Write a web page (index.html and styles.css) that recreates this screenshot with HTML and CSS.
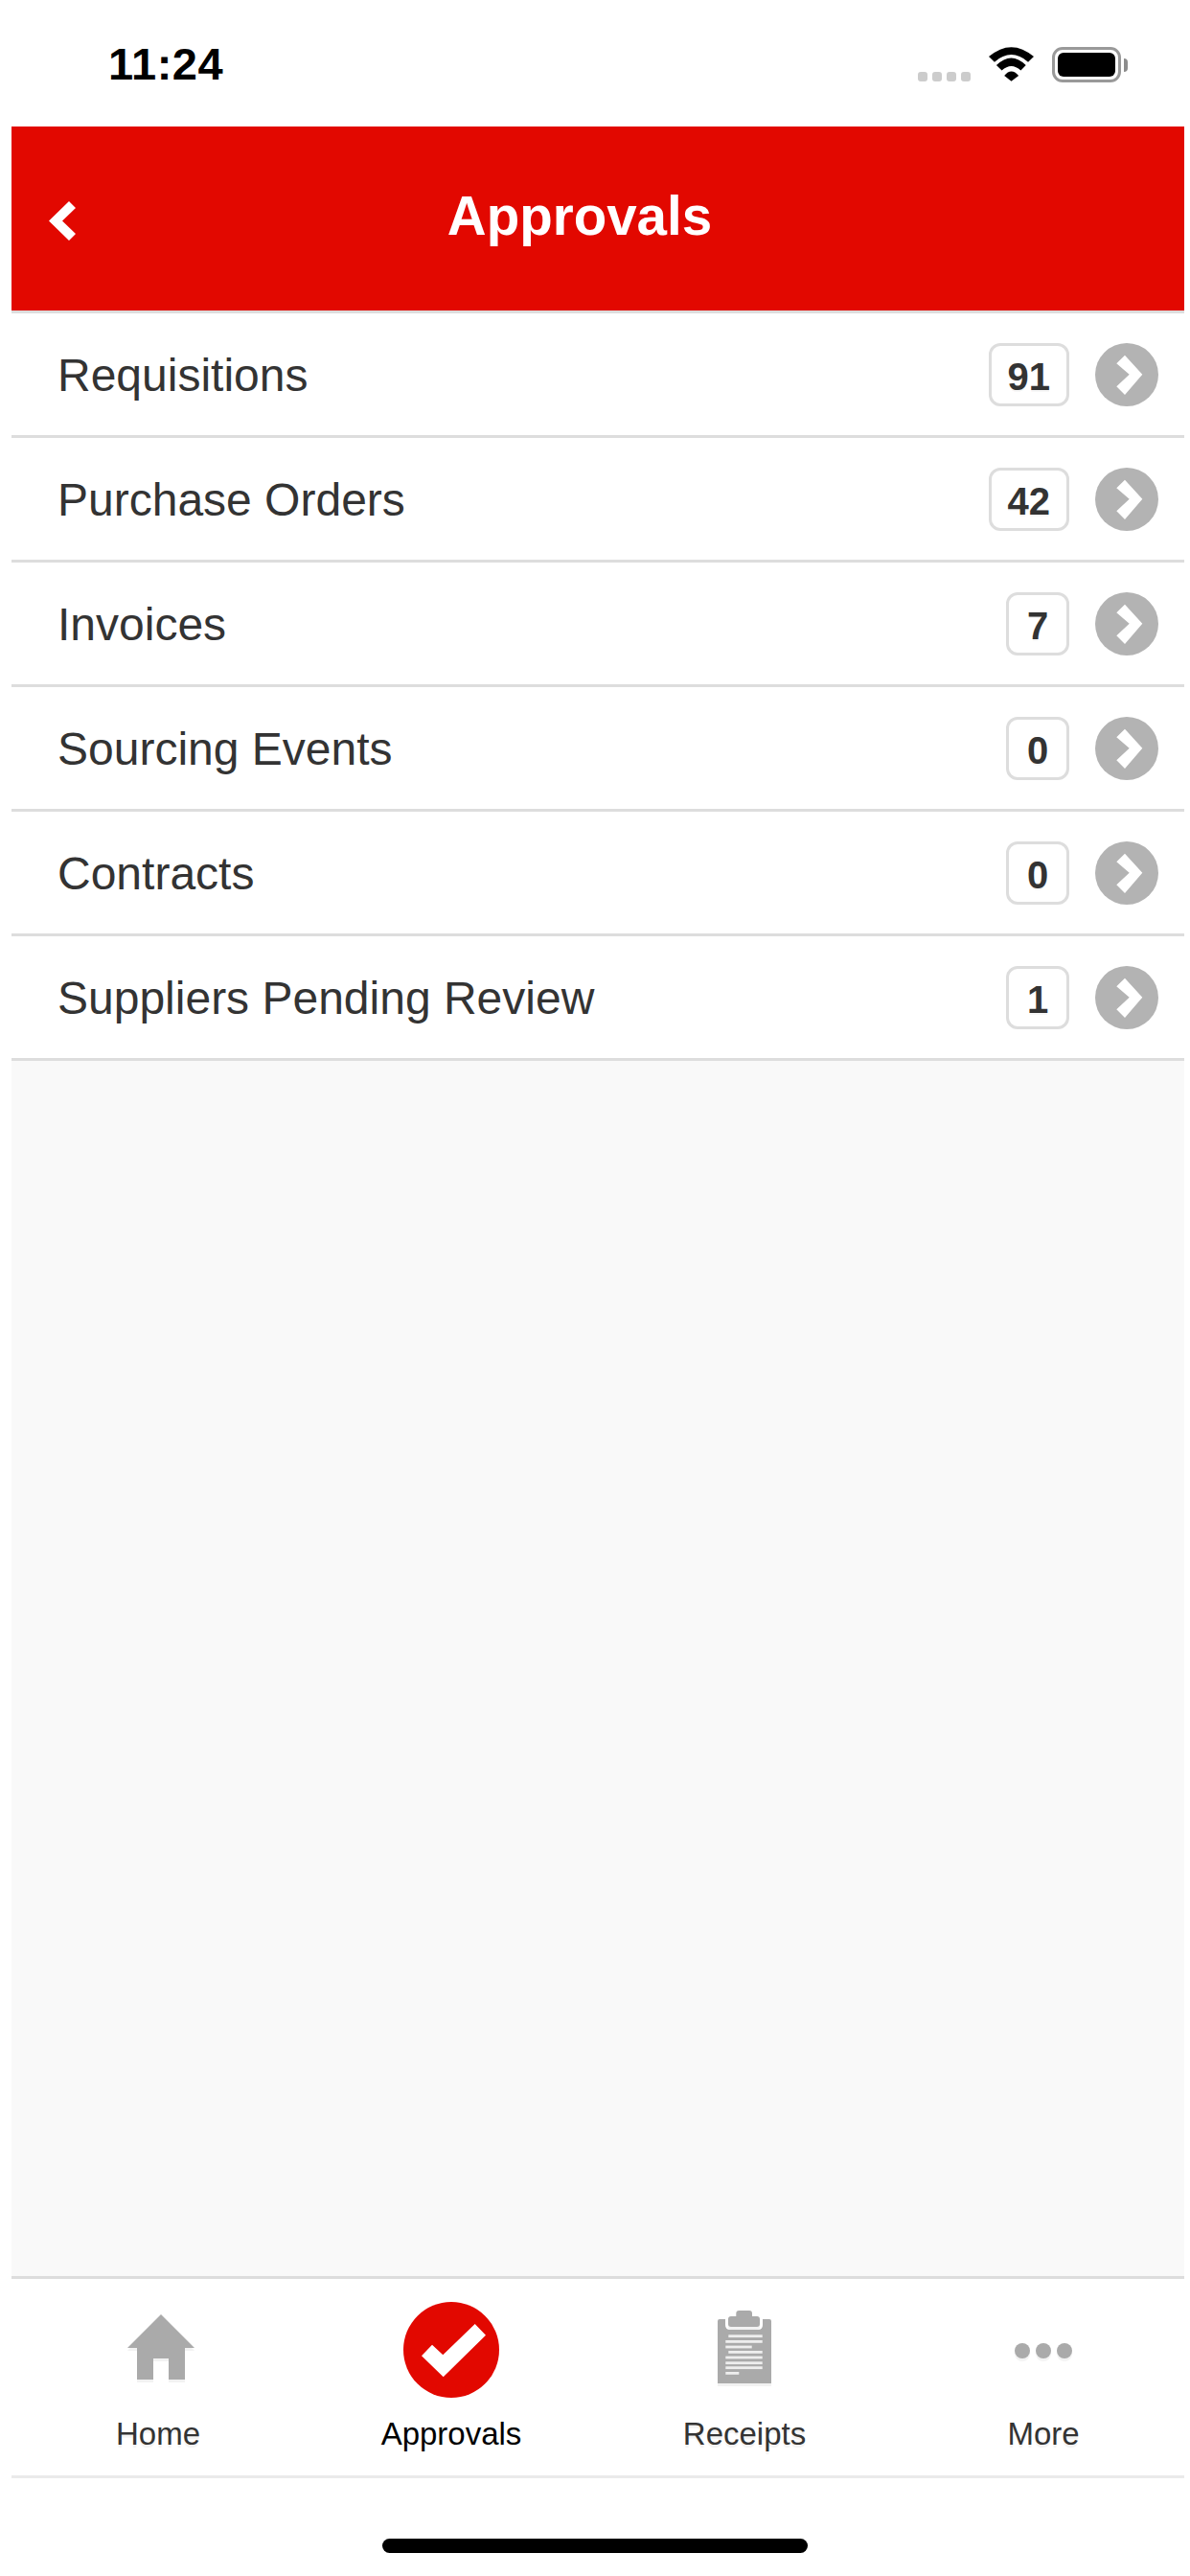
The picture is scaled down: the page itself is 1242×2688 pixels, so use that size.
FILE: index.html

```html
<!DOCTYPE html>
<html lang="en">
<head>
	<meta charset="UTF-8">
	<title>Approvals</title>
	<link rel="stylesheet" href="styles.css">
</head>
<body>

<div class="screen">
	<!-- status bar -->
	<div class="status">
		<span class="time">11:24</span>
		<div class="status-icons">
			<div class="signal"><i></i><i></i><i></i><i></i></div>
			<svg class="wifi" viewBox="0 0 142 108">
				<path d="M0 30Q71 -30 142 30L124 47Q71 1 18 47Z"/>
				<path d="M24 57Q71 11 117 57L101 74Q71 46 41 74Z"/>
				<path d="M49 90Q71 64 94 90L71 108Z"/>
			</svg>
			<div class="battery">
				<div class="battery-box"><div class="battery-fill"></div></div>
				<div class="battery-nub"></div>
			</div>
		</div>
	</div>

	<div class="panel">
		<div class="header">
			<svg class="back" viewBox="0 0 28 41"><path d="M21 0L28 7L14 20.500L28 34L21 41L0 20.500Z"/></svg>
			<h1 class="title">Approvals</h1>
		</div>

		<ul class="list">
			<li class="row">
				<span class="row-name">Requisitions</span>
				<span class="count">91</span>
				<svg class="go" viewBox="0 0 66 66"><circle cx="33" cy="33" r="33"/><path d="M31 12.700L49.300 32.700L31 54L22.300 45.300L35.700 32.700L22.300 21.300Z"/></svg>
			</li>
			<li class="row">
				<span class="row-name">Purchase Orders</span>
				<span class="count">42</span>
				<svg class="go" viewBox="0 0 66 66"><circle cx="33" cy="33" r="33"/><path d="M31 12.700L49.300 32.700L31 54L22.300 45.300L35.700 32.700L22.300 21.300Z"/></svg>
			</li>
			<li class="row">
				<span class="row-name">Invoices</span>
				<span class="count">7</span>
				<svg class="go" viewBox="0 0 66 66"><circle cx="33" cy="33" r="33"/><path d="M31 12.700L49.300 32.700L31 54L22.300 45.300L35.700 32.700L22.300 21.300Z"/></svg>
			</li>
			<li class="row">
				<span class="row-name">Sourcing Events</span>
				<span class="count">0</span>
				<svg class="go" viewBox="0 0 66 66"><circle cx="33" cy="33" r="33"/><path d="M31 12.700L49.300 32.700L31 54L22.300 45.300L35.700 32.700L22.300 21.300Z"/></svg>
			</li>
			<li class="row">
				<span class="row-name">Contracts</span>
				<span class="count">0</span>
				<svg class="go" viewBox="0 0 66 66"><circle cx="33" cy="33" r="33"/><path d="M31 12.700L49.300 32.700L31 54L22.300 45.300L35.700 32.700L22.300 21.300Z"/></svg>
			</li>
			<li class="row">
				<span class="row-name">Suppliers Pending Review</span>
				<span class="count">1</span>
				<svg class="go" viewBox="0 0 66 66"><circle cx="33" cy="33" r="33"/><path d="M31 12.700L49.300 32.700L31 54L22.300 45.300L35.700 32.700L22.300 21.300Z"/></svg>
			</li>
		</ul>

		<div class="blank"></div>

		<!-- tab bar -->
		<div class="tabs">
			<div class="tab">
				<div class="tab-icon">
					<svg class="icon-home" viewBox="0 0 70 68"><path d="M35 0L70 35H60V68H43V46H27V68H10V35H0Z"/></svg>
				</div>
				<span class="tab-label">Home</span>
			</div>
			<div class="tab tab-on">
				<div class="tab-icon">
					<svg class="icon-check" viewBox="0 0 100 100"><circle cx="50" cy="50" r="50"/><path d="M19 56.300L30 44.700L41.300 55.300L74.700 23L86 34.700L41.700 78.300Z"/></svg>
				</div>
				<span class="tab-label">Approvals</span>
			</div>
			<div class="tab">
				<div class="tab-icon">
					<svg class="icon-receipt" viewBox="0 0 56 76">
						<path class="clip-back" d="M2 9H8V15Q8 20 13 20H42Q47 20 47 15V9H54Q56 9 56 11V76H0V11Q0 9 2 9Z"/>
						<path class="clip-back" d="M14 6H19.300V3Q19.300 0 22.300 0H33Q36 0 36 3V6H41Q44 6 44 9V14Q44 17 41 17H14Q11 17 11 14V9Q11 6 14 6Z"/>
						<g class="clip-lines">
							<rect x="11.300" y="25.300" width="35.400" height="2.800"/>
							<rect x="8.300" y="31" width="38.400" height="2.800"/>
							<rect x="8.300" y="36.600" width="27.400" height="2.800"/>
							<rect x="11.300" y="42" width="35.400" height="2.800"/>
							<rect x="8.300" y="47.600" width="38.400" height="2.800"/>
							<rect x="8.300" y="53.300" width="38.400" height="2.800"/>
							<rect x="8.300" y="58.300" width="38.400" height="2.800"/>
							<rect x="8.300" y="64" width="14" height="2.800"/>
						</g>
					</svg>
				</div>
				<span class="tab-label">Receipts</span>
			</div>
			<div class="tab tab-more">
				<div class="tab-icon">
					<div class="more-dots"><i></i><i></i><i></i></div>
				</div>
				<span class="tab-label">More</span>
			</div>
		</div>
	</div>

	<div class="home-area"><div class="home-bar"></div></div>
</div>

</body>
</html>
```

FILE: styles.css

```css
*{margin: 0;padding: 0;box-sizing: border-box;}
ul{list-style: none;}
body{
	background-color: #fff;
	font-family: "Liberation Sans", Arial, sans-serif;
}
.screen{
	width: 1242px;
	height: 2688px;
	display: flex;
	flex-direction: column;
	overflow: hidden;
}

/*status bar*/
.status{
	height: 132px;
	flex: none;
	display: flex;
	justify-content: space-between;
	padding: 44px 65px 0 113px;
}
.time{
	font-size: 47px;
	line-height: 46px;
	font-weight: bold;
	letter-spacing: 0.5px;
	color: #000;
}
.status-icons{
	display: flex;
	align-items: flex-end;
	gap: 19px;
	height: 37px;
	margin-top: 5px;
}
.signal{
	display: flex;
	gap: 5px;
	margin-bottom: 1px;
}
.signal i{
	display: block;
	width: 10px;
	height: 10px;
	border-radius: 3px;
	background-color: #ccc;
}
.wifi{
	display: block;
	width: 47px;
	height: 36px;
	margin-bottom: 1px;
}
.battery{
	display: flex;
	align-items: center;
	gap: 3px;
}
.battery-box{
	width: 72px;
	height: 37px;
	border: 3px solid #999;
	border-radius: 11px;
	padding: 3px;
}
.battery-fill{
	height: 100%;
	background-color: #000;
	border-radius: 6px;
}
.battery-nub{
	width: 4px;
	height: 14px;
	background-color: #8c8c8c;
	border-radius: 0 7px 7px 0;
}

/*main panel*/
.panel{
	flex: none;
	height: 2454px;
	margin: 0 6px 0 12px;
	display: flex;
	flex-direction: column;
}
.header{
	height: 192px;
	flex: none;
	display: flex;
	align-items: center;
	background-color: #e20800;
	padding: 0 105px 0 39px;
}
.back{
	display: block;
	width: 28px;
	height: 41px;
	margin-top: 5px;
	fill: #fff;
}
.title{
	flex: 1;
	text-align: center;
	font-size: 56.5px;
	line-height: 64px;
	font-weight: bold;
	color: #fff;
	margin-top: -4px;
}

.list{
	flex: none;
	border-top: 3px solid #ddd;
	background-color: #fff;
}
.row{
	height: 130px;
	display: flex;
	align-items: center;
	border-bottom: 3px solid #ddd;
	padding: 0 27px 0 48px;
}
.row-name{
	flex: 1;
	font-size: 48px;
	color: #333;
	padding-top: 1px;
}
.count{
	min-width: 66px;
	height: 66px;
	border: 3px solid #ddd;
	border-radius: 12px;
	padding: 2px 17px 0;
	margin-right: 27px;
	font-size: 40px;
	line-height: 60px;
	font-weight: bold;
	text-align: center;
	color: #333;
	text-shadow: 0 2px 0 rgba(0,0,0,0.05);
}
.go{
	display: block;
	width: 66px;
	height: 66px;
	flex: none;
}
.go circle{fill: #b3b3b3;}
.go path{fill: #fff;}

.blank{
	flex: 1;
	background-color: #f9f9f9;
}

/*tab bar*/
.tabs{
	flex: none;
	height: 211px;
	display: grid;
	grid-template-columns: repeat(4, 1fr);
	background-color: #fff;
	border-top: 3px solid #ddd;
	border-bottom: 3px solid #eaeaea;
	padding-top: 24px;
}
.tab{
	display: flex;
	flex-direction: column;
	align-items: center;
}
.tab-more{
	padding-left: 12px;
}
.tab-icon{
	height: 99px;
	display: flex;
	align-items: center;
	justify-content: center;
}
.tab-label{
	margin-top: 19px;
	font-size: 33px;
	line-height: 40px;
	color: #333;
	text-shadow: 0 3px 1px rgba(0,0,0,0.05);
}
.tab-on .tab-label{
	color: #000;
	text-shadow: none;
}
.icon-home{
	display: block;
	width: 70px;
	height: 68px;
	margin: 0 0 5px 5px;
	fill: #aaa;
	filter: drop-shadow(0 3px 0 rgba(0,0,0,0.05));
}
.icon-check{
	display: block;
	width: 100px;
	height: 100px;
}
.icon-check circle{fill: #e20800;}
.icon-check path{fill: #fff;}
.icon-receipt{
	display: block;
	width: 56px;
	height: 76px;
	margin-bottom: 5px;
	filter: drop-shadow(0 3px 0 rgba(0,0,0,0.05));
}
.clip-back{fill: #aaa;}
.clip-lines{fill: #eee;}
.more-dots{
	display: flex;
	gap: 6px;
	margin-top: 3px;
}
.more-dots i{
	display: block;
	width: 16px;
	height: 16px;
	border-radius: 50%;
	background-color: #aaa;
	box-shadow: 0 3px 1px rgba(0,0,0,0.05);
}

.home-area{
	flex: 1;
	padding-top: 63px;
}
.home-bar{
	width: 444px;
	height: 15px;
	margin: 0 auto;
	border-radius: 8px;
	background-color: #000;
}
```
